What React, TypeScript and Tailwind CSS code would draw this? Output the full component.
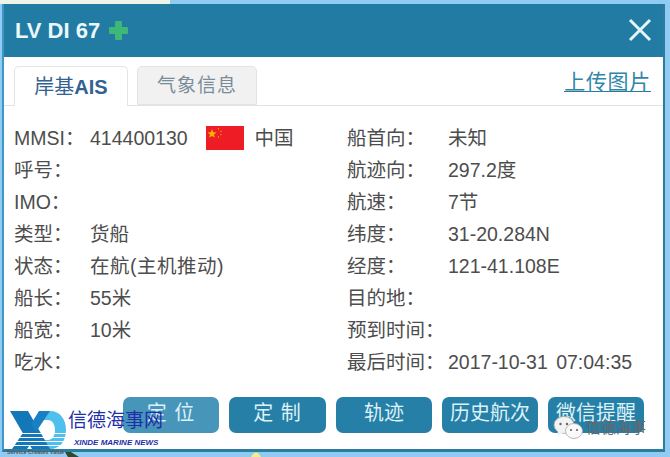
const font = "font-['Liberation_Sans','Noto_Sans_CJK_SC',sans-serif]";

const leftRows = [
  ["MMSI：", "414400130"],
  ["呼号：", ""],
  ["IMO：", ""],
  ["类型：", "货船"],
  ["状态：", "在航(主机推动)"],
  ["船长：", "55米"],
  ["船宽：", "10米"],
  ["吃水：", ""],
];

const rightRows = [
  ["船首向：", "未知"],
  ["航迹向：", "297.2度"],
  ["航速：", "7节"],
  ["纬度：", "31-20.284N"],
  ["经度：", "121-41.108E"],
  ["目的地：", ""],
  ["预到时间：", ""],
  ["最后时间：", "2017-10-31 07:04:35"],
];

function Flag() {
  return (
    <svg width="38" height="24" viewBox="0 0 38 24" className="mb-[2px] ml-[18px] mr-[11px] shrink-0">
      <rect width="38" height="24" fill="#ee1c25" />
      <polygon points="6,3 7.2,6.2 10.5,6.4 8,8.5 8.8,11.6 6,9.9 3.2,11.6 4,8.5 1.5,6.4 4.8,6.2" fill="#f7b500" />
      <circle cx="12.5" cy="2.8" r="0.7" fill="#f7b500" />
      <circle cx="15" cy="5.4" r="0.7" fill="#f7b500" />
      <circle cx="15" cy="8.6" r="0.7" fill="#f7b500" />
      <circle cx="12.5" cy="11" r="0.7" fill="#f7b500" />
    </svg>
  );
}

function Logo() {
  return (
    <svg width="56" height="38" viewBox="0 0 56 38" className="shrink-0">
      <path d="M30 0 H40 C50 0 56 8 56 19 C56 30 50 38 40 38 H24 L30 29 H38 C42 29 45 25 45 19 C45 13 42 9 38 9 H30 Z" fill="#4fc0ee" />
      <polygon points="0,0 18,0 40,38 22,38" fill="#1477b8" />
      <polygon points="2,38 15,19 24,28 17,38" fill="#1477b8" />
      <polygon points="21,13 29,0 40,0 26,21" fill="#1a80c4" />
      <g fill="#ffffff">
        <rect x="0" y="22" width="56" height="1" />
        <rect x="0" y="26" width="56" height="1" />
        <rect x="0" y="30" width="56" height="1" />
        <rect x="0" y="34" width="56" height="1" />
      </g>
    </svg>
  );
}

function WechatMark() {
  return (
    <svg width="32" height="26" viewBox="0 0 32 26">
      <ellipse cx="11" cy="10" rx="10" ry="8.5" fill="#f3f3f3" stroke="#a8a8a8" strokeWidth="0.8" />
      <polygon points="5,16 4,22 10,18" fill="#f3f3f3" />
      <circle cx="7.5" cy="9" r="1.2" fill="#666" />
      <circle cx="14" cy="9" r="1.2" fill="#666" />
      <ellipse cx="21" cy="16" rx="8.5" ry="7.5" fill="#fafafa" stroke="#a8a8a8" strokeWidth="0.8" />
      <circle cx="18" cy="15" r="1.1" fill="#666" />
      <circle cx="24" cy="15" r="1.1" fill="#666" />
    </svg>
  );
}

function ActionButton({ label, width, className }: { label: string; width: string; className?: string }) {
  return (
    <button className={`${width} h-[36px] shrink-0 rounded-[7px] pb-[4px] text-[20px] leading-[26px] text-[#dcf1f8] ${className ?? "bg-[#267fa6]"}`}>
      {label}
    </button>
  );
}

export default function App() {
  return (
    <div className={`${font} relative h-[457px] w-[670px] overflow-hidden bg-[#8fcbf2] pl-[2px] pt-[4px] text-[#4d4d4d]`}>
      <div className="absolute left-0 top-0 h-[4px] w-[170px] bg-[#eef3e8]" />

      <div className="flex h-[448px] w-[663px] flex-col border-x-[2px] border-b-[3px] border-t-0 border-[#2b7c9f] border-l-[#3f95c4] bg-white">
        <div className="flex h-[53px] shrink-0 items-center justify-between bg-[#217ba3] pl-[11px] pr-[11px]">
          <div className="flex items-center gap-[8px]">
            <span className="text-[22px] font-bold text-[#e9f8fb]">LV DI 67</span>
            <svg width="21" height="21" viewBox="0 0 21 21">
              <path d="M8 1 H13 Q14 1 14 2 V7 H19 Q20 7 20 8 V13 Q20 14 19 14 H14 V19 Q14 20 13 20 H8 Q7 20 7 19 V14 H2 Q1 14 1 13 V8 Q1 7 2 7 H7 V2 Q7 1 8 1 Z" fill="#3eb877" />
            </svg>
          </div>
          <svg width="24" height="24" viewBox="0 0 24 24" className="mb-[2px]">
            <path d="M2 2 L22 22 M22 2 L2 22" stroke="#e4f6fa" strokeWidth="3" />
          </svg>
        </div>

        <div className="flex h-[49px] shrink-0 items-end justify-between border-b border-[#e3e3e3] pl-[10px] pr-[12px]">
          <div className="flex items-end gap-[9px]">
            <div className="mb-[-1px] flex h-[40px] w-[114px] items-center justify-center rounded-t-[5px] border border-b-0 border-[#e5e5e5] bg-white text-[20px] font-bold text-[#32628f]">
              <span className="font-normal">岸基</span>AIS
            </div>
            <div className="flex h-[39px] w-[120px] items-center justify-center rounded-t-[5px] border border-[#e3e3e3] bg-[#f1f1f1] pt-[2px] text-[19px] tracking-[1px] text-[#7b8c99]">
              气象信息
            </div>
          </div>
          <a className="mb-[13px] border-b border-[#2a7a9e] text-[21px] leading-[19px] tracking-[0.7px] text-[#2f86a8]">上传图片</a>
        </div>

        <div className="flex pl-[10px] pt-[17px] text-[19.5px]">
          <div className="w-[333px]">
            {leftRows.map(([label, value], i) => (
              <div key={label} className="flex h-[32px] items-center">
                <span className="w-[76px] shrink-0">{label}</span>
                <span className={i === 4 ? "tracking-[0.5px]" : ""}>{value}</span>
                {i === 0 && <Flag />}
                {i === 0 && <span>中国</span>}
              </div>
            ))}
          </div>
          <div>
            {rightRows.map(([label, value]) => (
              <div key={label} className="flex h-[32px] items-center">
                <span className="w-[101px] shrink-0">{label}</span>
                <span className="[word-spacing:3px]">{value}</span>
              </div>
            ))}
          </div>
        </div>

        <div className="mt-[18px] flex gap-[10px] pl-[119px]">
          <ActionButton label="定 位" width="w-[96px]" className="bg-[#4795b8] tracking-[1px]" />
          <ActionButton label="定 制" width="w-[97px]" className="bg-[#267fa6] tracking-[1px]" />
          <ActionButton label="轨迹" width="w-[96px]" />
          <ActionButton label="历史航次" width="w-[96px]" />
          <ActionButton label="微信提醒" width="w-[96px]" />
        </div>
      </div>

      <div className="absolute left-[10px] top-[411px] flex">
        <div className="flex w-[56px] flex-col">
          <Logo />
          <span className="ml-[-3px] mt-[-1px] whitespace-nowrap text-[5.5px] font-bold leading-[8px] text-[#555]">Service Creates Value</span>
        </div>
        <div className="ml-[2px] mt-[-2px] flex flex-col">
          <span className="whitespace-nowrap text-[19px] leading-[24px] text-[#1e2fa8]">信德海事网</span>
          <span className="ml-[6px] mt-[5px] whitespace-nowrap text-[8px] font-bold italic leading-[10px] text-[#1e2fa8]">XINDE MARINE NEWS</span>
        </div>
      </div>

      <div className="absolute left-[553px] top-[415px] flex items-center gap-[1px]">
        <WechatMark />
        <span className="text-[15px] text-[#666]">信德海事</span>
      </div>

      <svg width="14" height="5" viewBox="0 0 14 5" className="absolute left-[65px] top-[452px]">
        <path d="M0 0 L6 0 L14 5 L3 5 Z" fill="#2f4a2f" />
      </svg>
      <svg width="12" height="6" viewBox="0 0 12 6" className="absolute left-[250px] top-[451px]">
        <path d="M1 6 Q6 -3 11 6 Z" fill="#eef08a" />
      </svg>
    </div>
  );
}
